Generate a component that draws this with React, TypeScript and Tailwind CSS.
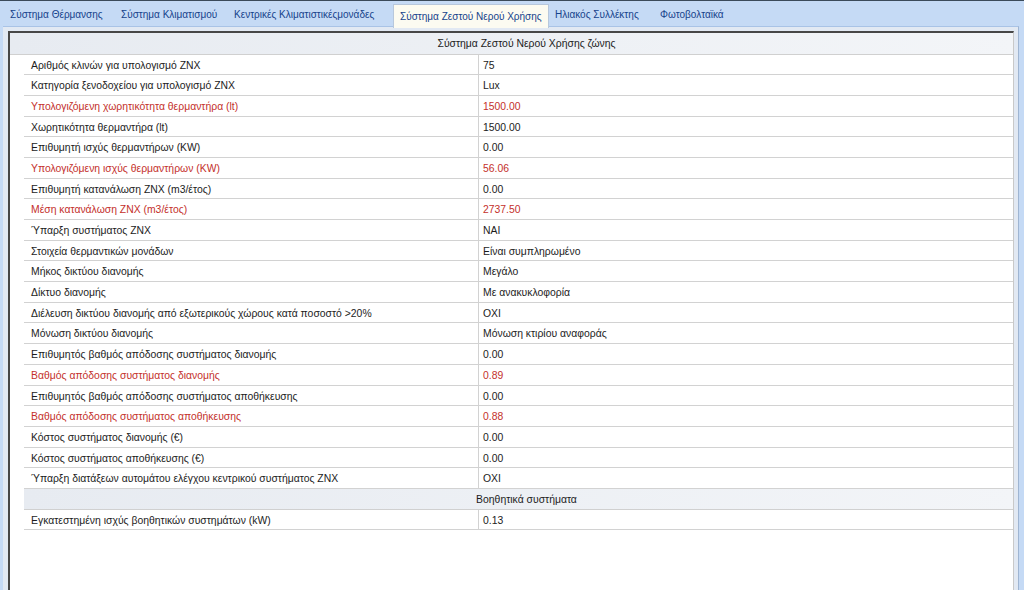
import React from 'react';

type Row = { label: string; value: string; red?: boolean };

const tabs = [
  { name: 'Σύστημα Θέρμανσης', w: 'w-[111px]' },
  { name: 'Σύστημα Κλιματισμού', w: 'w-[113px]' },
  { name: 'Κεντρικές Κλιματιστικέςμονάδες', w: 'w-[165px]' },
  { name: 'Σύστημα Ζεστού Νερού Χρήσης', w: 'w-[156px]', active: true },
  { name: 'Ηλιακός Συλλέκτης', w: 'w-[105px]' },
  { name: 'Φωτοβολταϊκά', w: 'w-[90px]' },
];

const rows: Row[] = [
  { label: 'Αριθμός κλινών για υπολογισμό ZNX', value: '75' },
  { label: 'Κατηγορία ξενοδοχείου για υπολογισμό ZNX', value: 'Lux' },
  { label: 'Υπολογιζόμενη χωρητικότητα θερμαντήρα (lt)', value: '1500.00', red: true },
  { label: 'Χωρητικότητα θερμαντήρα (lt)', value: '1500.00' },
  { label: 'Επιθυμητή ισχύς θερμαντήρων (KW)', value: '0.00' },
  { label: 'Υπολογιζόμενη ισχύς θερμαντήρων (KW)', value: '56.06', red: true },
  { label: 'Επιθυμητή κατανάλωση ZNX (m3/έτος)', value: '0.00' },
  { label: 'Μέση κατανάλωση ZNX (m3/έτος)', value: '2737.50', red: true },
  { label: 'Ύπαρξη συστήματος ZNX', value: 'NAI' },
  { label: 'Στοιχεία θερμαντικών μονάδων', value: 'Είναι συμπληρωμένο' },
  { label: 'Μήκος δικτύου διανομής', value: 'Μεγάλο' },
  { label: 'Δίκτυο διανομής', value: 'Με ανακυκλοφορία' },
  { label: 'Διέλευση δικτύου διανομής από εξωτερικούς χώρους κατά ποσοστό >20%', value: 'OXI' },
  { label: 'Μόνωση δικτύου διανομής', value: 'Μόνωση κτιρίου αναφοράς' },
  { label: 'Επιθυμητός βαθμός απόδοσης συστήματος διανομής', value: '0.00' },
  { label: 'Βαθμός απόδοσης συστήματος διανομής', value: '0.89', red: true },
  { label: 'Επιθυμητός βαθμός απόδοσης συστήματος αποθήκευσης', value: '0.00' },
  { label: 'Βαθμός απόδοσης συστήματος αποθήκευσης', value: '0.88', red: true },
  { label: 'Κόστος συστήματος διανομής (€)', value: '0.00' },
  { label: 'Κόστος συστήματος αποθήκευσης (€)', value: '0.00' },
  { label: 'Ύπαρξη διατάξεων αυτομάτου ελέγχου κεντρικού συστήματος ZNX', value: 'OXI' },
];

const auxRows: Row[] = [
  { label: 'Εγκατεστημένη ισχύς βοηθητικών συστημάτων (kW)', value: '0.13' },
];

function PropRow({ row }: { row: Row }) {
  const color = row.red ? 'text-[#c4302b]' : 'text-[#1c1c1c]';
  return (
    <div className={`flex h-[20.7px] items-center border-b border-[#d2d2d2] ${color}`}>
      <div className="w-[454px] shrink-0 truncate pl-[7px] pt-[2px]">{row.label}</div>
      <div className="flex h-full flex-1 items-center border-l border-[#d2d2d2] pl-[4px] pt-[2px]">{row.value}</div>
    </div>
  );
}

function SectionHeader({ title, indent }: { title: string; indent?: boolean }) {
  return (
    <div
      className={`flex items-center justify-center border-b border-[#d0d0d0] bg-gradient-to-r from-[#e7ebf1] to-[#f3f5f8] pt-[2px] text-[#1c1c1c] ${
        indent ? 'ml-[14px] h-[20.7px] pl-[16px]' : 'h-[21.5px] pl-[30px]'
      }`}
    >
      {title}
    </div>
  );
}

export default function App() {
  return (
    <div
      className="flex h-[590px] w-[1024px] flex-col overflow-hidden border-t border-[#3b4a5a] bg-[#c5daf5] text-[10.4px]"
      style={{ fontFamily: '"Liberation Sans", Arial, sans-serif' }}
    >
      {/* tab strip */}
      <div className="relative z-10 flex h-[25px] shrink-0 items-end pl-[4px] text-[10px]">
        {tabs.map((t) => (
          <div
            key={t.name}
            className={`flex shrink-0 items-center pl-[6px] text-[#15428b] ${t.w} ${
              t.active
                ? '-mb-[2px] h-[24px] border border-b-0 border-[#b8c8dc] bg-[#fcfbf1] pl-[4px]'
                : 'h-[21px] pb-[2px]'
            }`}
          >
            <span className="whitespace-nowrap">{t.name}</span>
          </div>
        ))}
      </div>

      {/* tab body */}
      <div className="ml-[3px] mr-[5px] flex flex-1 flex-col border-r border-t border-[#a9c3e6] border-r-[#9fb5d2] bg-[#e2e9f3] pl-[5px] pr-[4px] pt-[4px]">
        <div className="flex flex-1 flex-col border-l-2 border-t-2 border-[#474747] border-r border-r-[#c9c9c9] bg-white">
          <SectionHeader title="Σύστημα Ζεστού Νερού Χρήσης ζώνης" />
          <div className="ml-[14px]">
            {rows.map((r) => (
              <PropRow key={r.label} row={r} />
            ))}
          </div>
          <SectionHeader title="Βοηθητικά συστήματα" indent />
          <div className="ml-[14px]">
            {auxRows.map((r) => (
              <PropRow key={r.label} row={r} />
            ))}
          </div>
        </div>
      </div>
    </div>
  );
}
